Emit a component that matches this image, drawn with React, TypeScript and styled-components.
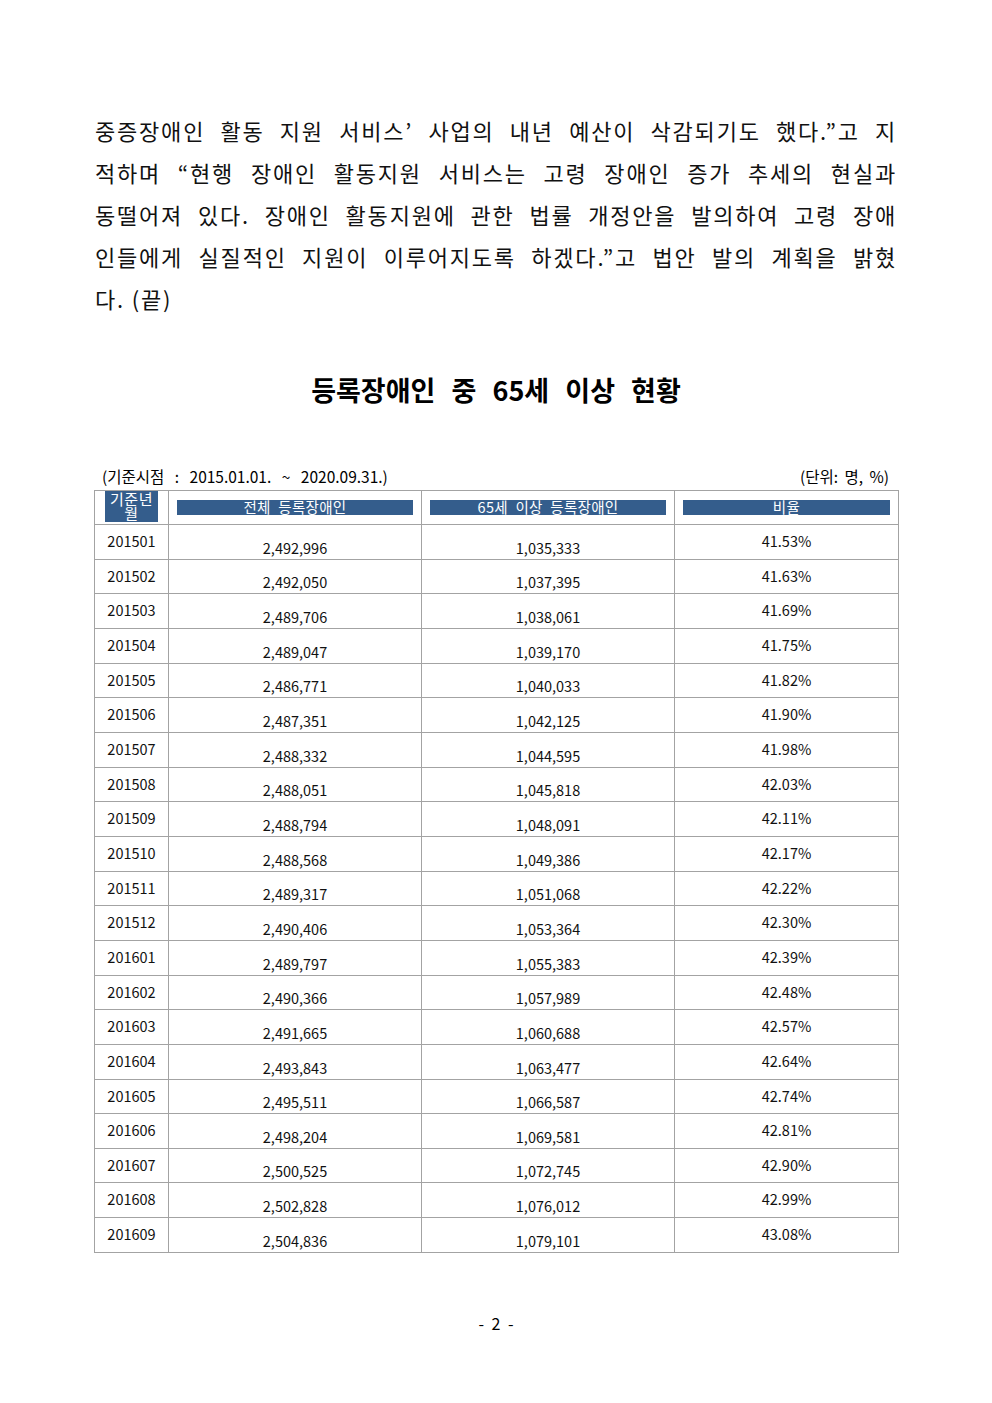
import React from "react";
import styled, { createGlobalStyle } from "styled-components";

const Global = createGlobalStyle`
  html, body { margin: 0; padding: 0; background: #fff; }
  body { font-family: "Noto Sans CJK KR", "Noto Sans", sans-serif; color: #000; }
`;

const Page = styled.div`
  width: 992px;
  box-sizing: border-box;
  padding: 109px 95px 60px 95px;
  display: flex;
  flex-direction: column;
`;

const Para = styled.div`
  display: flex;
  flex-direction: column;
`;

const Line = styled.div<{ $last?: boolean }>`
  font-family: "Noto Sans CJK KR", sans-serif;
  font-size: 22px;
  line-height: 42px;
  height: 42px;
  color: #111;
  text-align: ${(p) => (p.$last ? "left" : "justify")};
  text-align-last: ${(p) => (p.$last ? "left" : "justify")};
  white-space: nowrap;
  letter-spacing: 1.8px;
`;

const Title = styled.h1`
  margin: 51px 0 0 0;
  font-family: "Noto Sans CJK KR", sans-serif;
  font-size: 27px;
  font-weight: 700;
  line-height: 40px;
  text-align: center;
  word-spacing: 10px;
`;

const CaptionRow = styled.div`
  margin-top: 56px;
  display: flex;
  justify-content: space-between;
  padding: 0 8px 0 8px;
  font-size: 15.5px;
  line-height: 20px;
  margin-left: -1px;
`;

const Caption = styled.span<{ $gap: number }>`
  font-family: "Noto Sans CJK KR", sans-serif;
  word-spacing: ${(p) => p.$gap}px;
`;

const Table = styled.table`
  margin-top: 4px;
  margin-left: -1px;
  width: 804px;
  border-collapse: collapse;
  table-layout: fixed;
  font-family: "Noto Sans CJK KR", sans-serif;
  font-size: 14.5px;
`;

const HeadRow = styled.tr`
  height: 34px;
`;

const Row = styled.tr`
  height: 34.67px;
`;

const Th = styled.th`
  border: 1px solid #a3a3a3;
  padding: 0;
  vertical-align: top;
  font-weight: 400;
`;

const FirstHeadBox = styled.div`
  margin: 0 10px 0 10px;
  height: 31px;
  background: #345d8c;
  color: #fff;
  font-size: 15px;
  line-height: 14px;
  text-align: center;
  overflow: hidden;
  padding-top: 1px;
  box-sizing: border-box;
  letter-spacing: 0.5px;
`;

const HeadBar = styled.div`
  margin: 9px 8px 0 8px;
  height: 15px;
  background: #345d8c;
  color: #fff;
  font-size: 14.5px;
  line-height: 13px;
  text-align: center;
  overflow: hidden;
  word-spacing: 4px;
  letter-spacing: 0.3px;
`;

const Td = styled.td<{ $align: "top" | "bottom" }>`
  border: 1px solid #a3a3a3;
  padding: ${(p) => (p.$align === "bottom" ? "0 0 1px 0" : "6px 0 0 0")};
  vertical-align: ${(p) => p.$align};
  text-align: center;
  line-height: 20px;
  color: #111;
`;

const Footer = styled.div`
  margin-top: 60px;
  text-align: center;
  font-family: "Noto Sans CJK KR", sans-serif;
  font-size: 16px;
  line-height: 20px;
  word-spacing: 4px;
`;

const lines = [
  "중증장애인 활동 지원 서비스’ 사업의 내년 예산이 삭감되기도 했다.”고 지",
  "적하며 “현행 장애인 활동지원 서비스는 고령 장애인 증가 추세의 현실과",
  "동떨어져 있다. 장애인 활동지원에 관한 법률 개정안을 발의하여 고령 장애",
  "인들에게 실질적인 지원이 이루어지도록 하겠다.”고 법안 발의 계획을 밝혔",
];

const rows: [string, string, string, string][] = [
  ["201501", "2,492,996", "1,035,333", "41.53%"],
  ["201502", "2,492,050", "1,037,395", "41.63%"],
  ["201503", "2,489,706", "1,038,061", "41.69%"],
  ["201504", "2,489,047", "1,039,170", "41.75%"],
  ["201505", "2,486,771", "1,040,033", "41.82%"],
  ["201506", "2,487,351", "1,042,125", "41.90%"],
  ["201507", "2,488,332", "1,044,595", "41.98%"],
  ["201508", "2,488,051", "1,045,818", "42.03%"],
  ["201509", "2,488,794", "1,048,091", "42.11%"],
  ["201510", "2,488,568", "1,049,386", "42.17%"],
  ["201511", "2,489,317", "1,051,068", "42.22%"],
  ["201512", "2,490,406", "1,053,364", "42.30%"],
  ["201601", "2,489,797", "1,055,383", "42.39%"],
  ["201602", "2,490,366", "1,057,989", "42.48%"],
  ["201603", "2,491,665", "1,060,688", "42.57%"],
  ["201604", "2,493,843", "1,063,477", "42.64%"],
  ["201605", "2,495,511", "1,066,587", "42.74%"],
  ["201606", "2,498,204", "1,069,581", "42.81%"],
  ["201607", "2,500,525", "1,072,745", "42.90%"],
  ["201608", "2,502,828", "1,076,012", "42.99%"],
  ["201609", "2,504,836", "1,079,101", "43.08%"],
];

export default function App() {
  return (
    <>
      <Global />
      <Page>
        <Para>
          {lines.map((l) => (
            <Line key={l}>{l}</Line>
          ))}
          <Line $last>다. (끝)</Line>
        </Para>
        <Title>등록장애인 중 65세 이상 현황</Title>
        <CaptionRow>
          <Caption $gap={7}>(기준시점 : 2015.01.01. ~ 2020.09.31.)</Caption>
          <Caption $gap={3}>(단위: 명, %)</Caption>
        </CaptionRow>
        <Table>
          <colgroup>
            <col style={{ width: 74 }} />
            <col style={{ width: 253 }} />
            <col style={{ width: 253 }} />
            <col style={{ width: 224 }} />
          </colgroup>
          <thead>
            <HeadRow>
              <Th>
                <FirstHeadBox>
                  기준년
                  <br />월
                </FirstHeadBox>
              </Th>
              <Th>
                <HeadBar>전체 등록장애인</HeadBar>
              </Th>
              <Th>
                <HeadBar>65세 이상 등록장애인</HeadBar>
              </Th>
              <Th>
                <HeadBar>비율</HeadBar>
              </Th>
            </HeadRow>
          </thead>
          <tbody>
            {rows.map((r) => (
              <Row key={r[0]}>
                <Td $align="top">{r[0]}</Td>
                <Td $align="bottom">{r[1]}</Td>
                <Td $align="bottom">{r[2]}</Td>
                <Td $align="top">{r[3]}</Td>
              </Row>
            ))}
          </tbody>
        </Table>
        <Footer>- 2 -</Footer>
      </Page>
    </>
  );
}
